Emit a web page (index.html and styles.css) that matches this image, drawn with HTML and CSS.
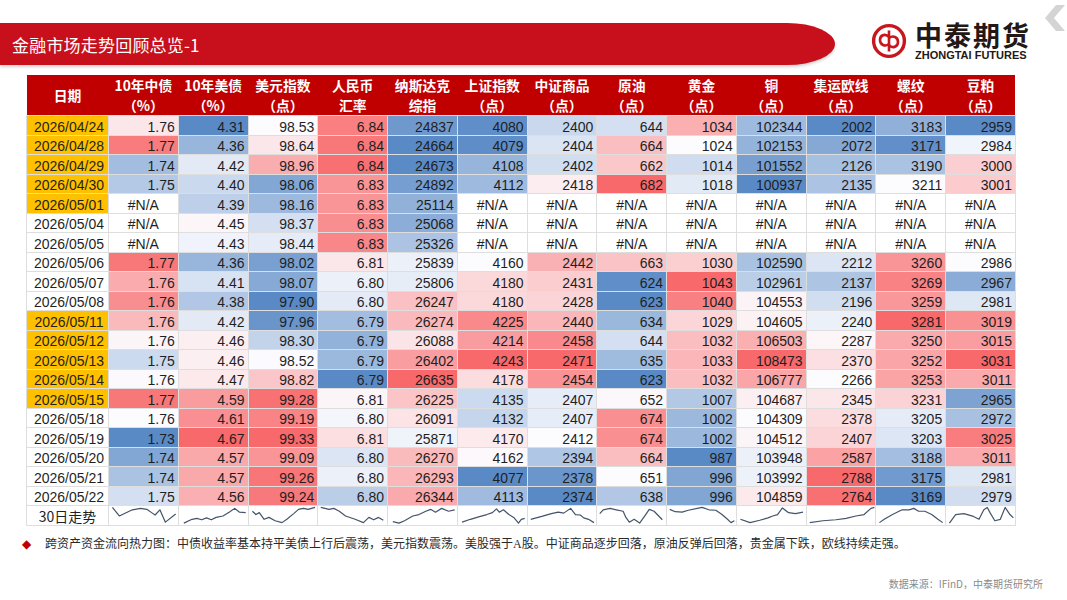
FILE: index.html
```html
<!DOCTYPE html>
<html lang="zh-CN">
<head>
<meta charset="utf-8">
<title>金融市场走势回顾总览-1</title>
<link rel="stylesheet" href="styles.css">
</head>
<body>
<div class="page">
  <header class="top">
    <div class="title-bar"><h1 class="title">金融市场走势回顾总览-1</h1></div>
    <div class="logo">
      <svg class="logo-mark" viewBox="0 0 36 36" width="36" height="36">
        <circle cx="18" cy="18" r="15.4" fill="none" stroke="#c8161d" stroke-width="3.4"/>
        <path d="M18 7.5 V28.5" fill="none" stroke="#c8161d" stroke-width="2.6"/>
        <path d="M18 14 C15 10.5 9 11.5 9 17 C9 22 14 24 18 21" fill="none" stroke="#c8161d" stroke-width="2.6"/>
        <path d="M18 15 C22 12 27 14 27 19 C27 24.5 21 25.5 18 22" fill="none" stroke="#c8161d" stroke-width="2.6"/>
      </svg>
      <div class="logo-text">
        <div class="logo-cn">中泰期货</div>
        <div class="logo-en">ZHONGTAI FUTURES</div>
      </div>
    </div>
    <svg class="chevron" viewBox="0 0 22 26" width="22" height="26">
      <polygon points="13,0 22,0 11,13 22,26 13,26 2,13" fill="#d4d4d4"/>
    </svg>
  </header>

  <table class="heat">
    <colgroup>
      <col class="c-date">
      <col span="13" class="c-val">
    </colgroup>
    <thead>
      <tr>
        <th>日期</th>
        <th>10年中债<br>（%）</th>
        <th>10年美债<br>（%）</th>
        <th>美元指数<br>（点）</th>
        <th>人民币<br>汇率</th>
        <th>纳斯达克<br>综指</th>
        <th>上证指数<br>（点）</th>
        <th>中证商品<br>（点）</th>
        <th>原油<br>（点）</th>
        <th>黄金<br>（点）</th>
        <th>铜<br>（点）</th>
        <th>集运欧线<br>（点）</th>
        <th>螺纹<br>（点）</th>
        <th>豆粕<br>（点）</th>
      </tr>
    </thead>
    <tbody>
      <tr class="data"><td class="date hl">2026/04/24</td><td data-t="0.15">1.76</td><td>4.31</td><td>98.53</td><td data-t="0.85">6.84</td><td>24837</td><td>4080</td><td>2400</td><td>644</td><td>1034</td><td>102344</td><td>2002</td><td>3183</td><td>2959</td></tr>
      <tr class="data"><td class="date hl">2026/04/28</td><td data-t="0.88">1.77</td><td>4.36</td><td>98.64</td><td data-t="0.9">6.84</td><td>24664</td><td>4079</td><td>2404</td><td>664</td><td>1024</td><td>102153</td><td>2072</td><td>3171</td><td>2984</td></tr>
      <tr class="data"><td class="date hl">2026/04/29</td><td data-t="-0.55">1.74</td><td>4.42</td><td>98.96</td><td data-t="0.95">6.84</td><td>24673</td><td>4108</td><td>2402</td><td>662</td><td>1014</td><td>101552</td><td>2126</td><td>3190</td><td>3000</td></tr>
      <tr class="data"><td class="date hl">2026/04/30</td><td data-t="-0.45">1.75</td><td>4.40</td><td>98.06</td><td data-t="0.7">6.83</td><td>24892</td><td>4112</td><td>2418</td><td>682</td><td>1018</td><td>100937</td><td>2135</td><td>3211</td><td>3001</td></tr>
      <tr class="data"><td class="date hl">2026/05/01</td><td class="na">#N/A</td><td>4.39</td><td>98.16</td><td data-t="0.7">6.83</td><td>25114</td><td class="na">#N/A</td><td class="na">#N/A</td><td class="na">#N/A</td><td class="na">#N/A</td><td class="na">#N/A</td><td class="na">#N/A</td><td class="na">#N/A</td><td class="na">#N/A</td></tr>
      <tr class="data"><td class="date">2026/05/04</td><td class="na">#N/A</td><td>4.45</td><td>98.37</td><td data-t="0.75">6.83</td><td>25068</td><td class="na">#N/A</td><td class="na">#N/A</td><td class="na">#N/A</td><td class="na">#N/A</td><td class="na">#N/A</td><td class="na">#N/A</td><td class="na">#N/A</td><td class="na">#N/A</td></tr>
      <tr class="data"><td class="date">2026/05/05</td><td class="na">#N/A</td><td>4.43</td><td>98.44</td><td data-t="0.8">6.83</td><td>25326</td><td class="na">#N/A</td><td class="na">#N/A</td><td class="na">#N/A</td><td class="na">#N/A</td><td class="na">#N/A</td><td class="na">#N/A</td><td class="na">#N/A</td><td class="na">#N/A</td></tr>
      <tr class="data"><td class="date">2026/05/06</td><td data-t="0.9">1.77</td><td>4.36</td><td>98.02</td><td data-t="0.15">6.81</td><td>25839</td><td>4160</td><td>2442</td><td>663</td><td>1030</td><td>102590</td><td>2212</td><td>3260</td><td>2986</td></tr>
      <tr class="data"><td class="date">2026/05/07</td><td data-t="0.55">1.76</td><td>4.41</td><td>98.07</td><td data-t="-0.1">6.80</td><td>25806</td><td>4180</td><td>2431</td><td>624</td><td>1043</td><td>102961</td><td>2137</td><td>3269</td><td>2967</td></tr>
      <tr class="data"><td class="date">2026/05/08</td><td data-t="0.75">1.76</td><td>4.38</td><td>97.90</td><td data-t="-0.15">6.80</td><td>26247</td><td>4180</td><td>2428</td><td>623</td><td>1040</td><td>104553</td><td>2196</td><td>3259</td><td>2981</td></tr>
      <tr class="data"><td class="date hl">2026/05/11</td><td data-t="0.45">1.76</td><td>4.42</td><td>97.96</td><td data-t="-0.55">6.79</td><td>26274</td><td>4225</td><td>2440</td><td>634</td><td>1029</td><td>104605</td><td>2240</td><td>3281</td><td>3019</td></tr>
      <tr class="data"><td class="date hl">2026/05/12</td><td data-t="0.05">1.76</td><td>4.46</td><td>98.30</td><td data-t="-0.65">6.79</td><td>26088</td><td>4214</td><td>2458</td><td>644</td><td>1032</td><td>106503</td><td>2287</td><td>3250</td><td>3015</td></tr>
      <tr class="data"><td class="date hl">2026/05/13</td><td data-t="-0.3">1.75</td><td>4.46</td><td>98.52</td><td data-t="-0.6">6.79</td><td>26402</td><td>4243</td><td>2471</td><td>635</td><td>1033</td><td>108473</td><td>2370</td><td>3252</td><td>3031</td></tr>
      <tr class="data"><td class="date hl">2026/05/14</td><td data-t="0.02">1.76</td><td>4.47</td><td>98.82</td><td data-t="-1">6.79</td><td>26635</td><td>4178</td><td>2454</td><td>623</td><td>1032</td><td>106777</td><td>2266</td><td>3253</td><td>3011</td></tr>
      <tr class="data"><td class="date hl">2026/05/15</td><td data-t="0.9">1.77</td><td>4.59</td><td>99.28</td><td data-t="0.05">6.81</td><td>26225</td><td>4135</td><td>2407</td><td>652</td><td>1007</td><td>104687</td><td>2345</td><td>3231</td><td>2965</td></tr>
      <tr class="data"><td class="date">2026/05/18</td><td data-t="0">1.76</td><td>4.61</td><td>99.19</td><td data-t="-0.05">6.80</td><td>26091</td><td>4132</td><td>2407</td><td>674</td><td>1002</td><td>104309</td><td>2378</td><td>3205</td><td>2972</td></tr>
      <tr class="data"><td class="date">2026/05/19</td><td data-t="-1">1.73</td><td>4.67</td><td>99.33</td><td data-t="0.2">6.81</td><td>25871</td><td>4170</td><td>2412</td><td>674</td><td>1002</td><td>104512</td><td>2407</td><td>3203</td><td>3025</td></tr>
      <tr class="data"><td class="date">2026/05/20</td><td data-t="-0.75">1.74</td><td>4.57</td><td>99.09</td><td data-t="-0.2">6.80</td><td>26270</td><td>4162</td><td>2394</td><td>664</td><td>987</td><td>103948</td><td>2587</td><td>3188</td><td>3011</td></tr>
      <tr class="data"><td class="date">2026/05/21</td><td data-t="-0.5">1.74</td><td>4.57</td><td>99.26</td><td data-t="-0.1">6.80</td><td>26293</td><td>4077</td><td>2378</td><td>651</td><td>996</td><td>103992</td><td>2788</td><td>3175</td><td>2981</td></tr>
      <tr class="data"><td class="date">2026/05/22</td><td data-t="-0.25">1.75</td><td>4.56</td><td>99.24</td><td data-t="-0.4">6.80</td><td>26344</td><td>4113</td><td>2374</td><td>638</td><td>996</td><td>104859</td><td>2764</td><td>3169</td><td>2979</td></tr>
      <tr class="spark">
        <td class="date">30日走势</td>
        <td><svg viewBox="0 0 100 20" preserveAspectRatio="none"><polyline points="5,1.5 15,10.5 34,4 46,2.5 55,3.5 63,7.5 67,9.5 74,4 82,17 97,8.5"/></svg></td>
        <td><svg viewBox="0 0 100 20" preserveAspectRatio="none"><polyline points="7,18 19,14 26,13 33,14.5 40,12.5 47,14.5 54,12 64,10.5 74,6 81,2.5 88,6.5 97,7"/></svg></td>
        <td><svg viewBox="0 0 100 20" preserveAspectRatio="none"><polyline points="5,5.5 10,9 15,7 22,14 29,12 38,15.5 48,17.5 55,14 65,8 72,3.5 79,2.5 86,3.5 96,1.5"/></svg></td>
        <td><svg viewBox="0 0 100 20" preserveAspectRatio="none"><polyline points="4,1.5 16,3.5 23,2.5 31,5.5 40,10.5 54,14 66,17.5 74,12 81,14.5 88,12 95,15"/></svg></td>
        <td><svg viewBox="0 0 100 20" preserveAspectRatio="none"><polyline points="7,16.5 16,18 24,15.5 36,10.5 45,9 55,5.5 62,3.5 69,6.5 78,2.5 88,5.5 97,4"/></svg></td>
        <td><svg viewBox="0 0 100 20" preserveAspectRatio="none"><polyline points="6,17 18,14 30,11.5 42,9 50,7 56,3 60,6.5 66,4 74,9 81,12 88,18 92,14 97,13"/></svg></td>
        <td><svg viewBox="0 0 100 20" preserveAspectRatio="none"><polyline points="4,14 20,11 34,8 44,6.5 52,7.5 62,2.5 69,9 76,9.5 81,12.5 88,14 96,17.5"/></svg></td>
        <td><svg viewBox="0 0 100 20" preserveAspectRatio="none"><polyline points="4,8 9,4 19,2.5 28,4 38,5.5 42,12 47,17 54,14 62,18 69,11 76,3.5 83,5.5 95,14.5"/></svg></td>
        <td><svg viewBox="0 0 100 20" preserveAspectRatio="none"><polyline points="4,3.5 12,6 22,6.5 31,4.5 44,2.5 51,1.5 61,4 71,4.5 80,9 88,14 93,17.5 98,15.5"/></svg></td>
        <td><svg viewBox="0 0 100 20" preserveAspectRatio="none"><polyline points="5,14 19,17.5 33,15 45,12.5 52,10.5 59,9 66,2 75,7 85,8 96,6.5"/></svg></td>
        <td><svg viewBox="0 0 100 20" preserveAspectRatio="none"><polyline points="4,17.5 23,15.5 42,14.5 57,13 71,10.5 83,9 93,2.5 98,1.5"/></svg></td>
        <td><svg viewBox="0 0 100 20" preserveAspectRatio="none"><polyline points="5,17.5 12,14 24,9 38,4 48,4 55,2.5 62,5.5 71,5.5 81,9 90,14 97,17.5"/></svg></td>
        <td><svg viewBox="0 0 100 20" preserveAspectRatio="none"><polyline points="5,18 14,9 26,8 40,11 48,14 55,4 60,1.5 64,7 71,15.5 79,14 86,1.5 93,9 98,12.5"/></svg></td>
      </tr>
    </tbody>
  </table>

  <p class="note"><span class="diamond">◆</span><span class="note-text">跨资产资金流向热力图：中债收益率基本持平美债上行后震荡，美元指数震荡。美股强于A股。中证商品逐步回落，原油反弹后回落，贵金属下跌，欧线持续走强。</span></p>

  <p class="source">数据来源：IFinD，中泰期货研究所</p>
</div>
<script src="script.js"></script>
</body>
</html>
```

FILE: styles.css
```css
* { box-sizing: border-box; }

html, body {
  margin: 0;
  padding: 0;
  background: #ffffff;
}

.page {
  width: 1067px;
  height: 600px;
  overflow: hidden;
  font-family: "Liberation Sans", "Noto Sans CJK SC", sans-serif;
  color: #1f1f1f;
}

/* ---------- top header ---------- */
.top {
  display: flex;
  align-items: flex-start;
  height: 75px;
}

.title-bar {
  margin-top: 23px;
  width: 835px;
  height: 42px;
  background: #c8101c;
  border-top-right-radius: 48px 21px;
  border-bottom-right-radius: 48px 21px;
  box-shadow: 0 2px 3px rgba(0, 0, 0, 0.18);
  display: flex;
  align-items: center;
  padding-left: 12px;
}

.title {
  margin: 0;
  font-family: "Noto Sans CJK SC", sans-serif;
  font-weight: 400;
  font-size: 17px;
  line-height: 1;
  color: #ffffff;
  letter-spacing: 0.2px;
}

.logo {
  display: flex;
  align-items: center;
  margin-left: 36px;
  margin-top: 21px;
}

.logo-mark {
  display: block;
  flex: none;
}

.logo-text {
  margin-left: 8px;
  display: flex;
  flex-direction: column;
}

.logo-cn {
  font-family: "Noto Sans CJK SC", sans-serif;
  font-weight: 700;
  font-size: 27px;
  line-height: 28px;
  color: #231815;
  letter-spacing: 2px;
}

.logo-en {
  font-family: "Liberation Sans", sans-serif;
  font-weight: 700;
  font-size: 11px;
  line-height: 11px;
  color: #231815;
  margin-top: 1px;
}

.chevron {
  display: block;
  margin-left: 12px;
  margin-top: 5px;
  flex: none;
}

/* ---------- heat table ---------- */
.heat {
  margin-left: 26px;
  width: 989px;
  table-layout: fixed;
  border-collapse: collapse;
}

.c-date { width: 82px; }
.c-val { width: 69.77px; }

.heat th {
  height: 40px;
  padding: 0;
  background: #c00000;
  color: #ffffff;
  font-family: "Noto Sans CJK SC", sans-serif;
  font-weight: 700;
  font-size: 13.8px;
  line-height: 20px;
  text-align: center;
  vertical-align: middle;
  white-space: nowrap;
}

.heat td {
  height: 19.5px;
  padding: 0 3px 0 0;
  border: 1px solid #dedede;
  font-size: 14px;
  line-height: 16px;
  text-align: right;
  vertical-align: bottom;
  white-space: nowrap;
  background: #ffffff;
}

.heat td.date {
  text-align: center;
  padding: 0 0 0 3px;
}

.heat td.hl {
  background: #ffc000;
}

.heat td.na {
  text-align: center;
  padding: 0;
}

.heat tr.spark td {
  height: 20px;
  padding: 0;
  vertical-align: middle;
  background: #ffffff;
}

.heat tr.spark td.date {
  font-family: "Noto Sans CJK SC", sans-serif;
  font-size: 14px;
}

.heat tr.spark svg {
  display: block;
  width: 100%;
  height: 19px;
}

.heat tr.spark polyline {
  fill: none;
  stroke: #44546a;
  stroke-width: 1.2;
  stroke-linejoin: round;
  vector-effect: non-scaling-stroke;
}

/* ---------- footer ---------- */
.note {
  margin: 10px 0 0 22px;
  display: flex;
  align-items: center;
  font-size: 12px;
  line-height: 16px;
}

.diamond {
  color: #c00000;
  font-family: "DejaVu Sans", sans-serif;
  font-size: 12px;
  width: 23px;
}

.note-text {
  font-family: "Liberation Serif", "Noto Sans CJK SC", serif;
  font-size: 12px;
  color: #2a2a2a;
}

.source {
  margin: 26px 24px 0 0;
  text-align: right;
  font-family: "Noto Sans CJK SC", sans-serif;
  font-size: 10px;
  line-height: 12px;
  color: #8a8a8a;
}
```

FILE: script.js
```javascript
(function () {
  var RED = [248, 105, 107];
  var WHITE = [252, 252, 255];
  var BLUE = [90, 138, 198];

  function mix(a, b, t) {
    return a.map(function (v, i) { return Math.round(v + (b[i] - v) * t); });
  }

  function colorFor(t) {
    t = Math.max(-1, Math.min(1, t));
    var c = t >= 0 ? mix(WHITE, RED, t) : mix(WHITE, BLUE, -t);
    return "rgb(" + c[0] + "," + c[1] + "," + c[2] + ")";
  }

  var rows = Array.prototype.slice.call(document.querySelectorAll(".heat tr.data"));
  var ncol = rows[0].cells.length;

  for (var c = 1; c < ncol; c++) {
    var cells = rows.map(function (r) { return r.cells[c]; });
    var vals = cells
      .map(function (td) { return parseFloat(td.textContent); })
      .filter(function (v) { return !isNaN(v); })
      .sort(function (a, b) { return a - b; });
    if (!vals.length) continue;
    var min = vals[0];
    var max = vals[vals.length - 1];
    var n = vals.length;
    var med = n % 2 ? vals[(n - 1) / 2] : (vals[n / 2 - 1] + vals[n / 2]) / 2;

    cells.forEach(function (td) {
      var t;
      if (td.dataset.t !== undefined) {
        t = parseFloat(td.dataset.t);
      } else {
        var v = parseFloat(td.textContent);
        if (isNaN(v)) return;
        if (v >= med) t = max > med ? (v - med) / (max - med) : 0;
        else t = med > min ? -(med - v) / (med - min) : 0;
      }
      td.style.backgroundColor = colorFor(t);
    });
  }
})();
```
